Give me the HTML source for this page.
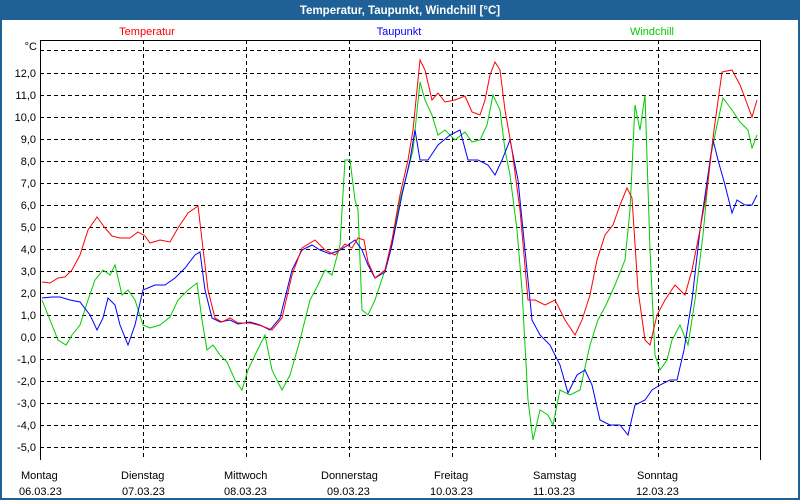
<!DOCTYPE html>
<html><head><meta charset="utf-8"><style>
html,body{margin:0;padding:0;width:800px;height:500px;overflow:hidden;background:#1f6196;}
svg{display:block}
text{font-family:"Liberation Sans",sans-serif;font-size:11px}
</style></head><body>
<svg width="800" height="500" xmlns="http://www.w3.org/2000/svg">
<rect x="0" y="0" width="800" height="500" fill="#1f6196"/>
<text x="400" y="14" text-anchor="middle" fill="#fff" font-weight="bold" style="font-size:11.5px">Temperatur, Taupunkt, Windchill [°C]</text>
<rect x="2" y="20" width="796" height="478" fill="#fff"/>
<text x="147" y="35" text-anchor="middle" fill="#ff0000">Temperatur</text>
<text x="399" y="35" text-anchor="middle" fill="#0000ff">Taupunkt</text>
<text x="652" y="35" text-anchor="middle" fill="#00cc00">Windchill</text>
<g stroke="#000" stroke-dasharray="4,3" stroke-width="1">
<line x1="40" y1="50.5" x2="760" y2="50.5"/>
<line x1="40" y1="73.5" x2="760" y2="73.5"/>
<line x1="40" y1="95.5" x2="760" y2="95.5"/>
<line x1="40" y1="117.5" x2="760" y2="117.5"/>
<line x1="40" y1="139.5" x2="760" y2="139.5"/>
<line x1="40" y1="161.5" x2="760" y2="161.5"/>
<line x1="40" y1="183.5" x2="760" y2="183.5"/>
<line x1="40" y1="205.5" x2="760" y2="205.5"/>
<line x1="40" y1="227.5" x2="760" y2="227.5"/>
<line x1="40" y1="249.5" x2="760" y2="249.5"/>
<line x1="40" y1="271.5" x2="760" y2="271.5"/>
<line x1="40" y1="293.5" x2="760" y2="293.5"/>
<line x1="40" y1="315.5" x2="760" y2="315.5"/>
<line x1="40" y1="337.5" x2="760" y2="337.5"/>
<line x1="40" y1="359.5" x2="760" y2="359.5"/>
<line x1="40" y1="381.5" x2="760" y2="381.5"/>
<line x1="40" y1="403.5" x2="760" y2="403.5"/>
<line x1="40" y1="425.5" x2="760" y2="425.5"/>
<line x1="40" y1="447.5" x2="760" y2="447.5"/>
<line x1="143.5" y1="40" x2="143.5" y2="460"/>
<line x1="246.5" y1="40" x2="246.5" y2="460"/>
<line x1="349.5" y1="40" x2="349.5" y2="460"/>
<line x1="452.5" y1="40" x2="452.5" y2="460"/>
<line x1="555.5" y1="40" x2="555.5" y2="460"/>
<line x1="658.5" y1="40" x2="658.5" y2="460"/>
</g>
<g fill="none" stroke="#000" stroke-width="1"><path d="M40.5 460V40.5H760.5V460"/></g>
<g font-size="11" text-anchor="end" fill="#000">
<text x="37" y="50">°C</text>
<text x="36" y="77">12,0</text><text x="36" y="99">11,0</text><text x="36" y="121">10,0</text>
<text x="36" y="143">9,0</text><text x="36" y="165">8,0</text><text x="36" y="187">7,0</text>
<text x="36" y="209">6,0</text><text x="36" y="231">5,0</text><text x="36" y="253">4,0</text>
<text x="36" y="275">3,0</text><text x="36" y="297">2,0</text><text x="36" y="319">1,0</text>
<text x="36" y="341">0,0</text><text x="36" y="363">-1,0</text><text x="36" y="385">-2,0</text>
<text x="36" y="407">-3,0</text><text x="36" y="429">-4,0</text><text x="36" y="451">-5,0</text>
</g>
<g fill="#000">
<text x="21" y="479">Montag</text><text x="19" y="495">06.03.23</text>
<text x="121" y="479">Dienstag</text><text x="122" y="495">07.03.23</text>
<text x="224" y="479">Mittwoch</text><text x="224" y="495">08.03.23</text>
<text x="321" y="479">Donnerstag</text><text x="327" y="495">09.03.23</text>
<text x="434" y="479">Freitag</text><text x="430" y="495">10.03.23</text>
<text x="533" y="479">Samstag</text><text x="533" y="495">11.03.23</text>
<text x="637" y="479">Sonntag</text><text x="636" y="495">12.03.23</text>
</g>
<polyline fill="none" stroke="#00cc00" stroke-width="1" points="42,300 50,320 58,340 66,345 72,335 80,325 88,300 95,280 103,270 110,275 115,265 122,295 128,290 135,300 143,325 150,328 160,325 170,317 178,300 188,290 197,283 202,320 207,350 213,345 220,355 227,362 235,380 242,390 248,370 255,355 265,335 272,370 282,390 290,375 300,340 310,300 318,285 325,270 332,275 340,245 345,160 350,160 355,200 358,210 362,310 368,315 375,300 385,270 392,242 400,200 408,170 413,150 420,82 425,100 432,115 438,135 445,130 455,140 465,132 472,142 480,140 487,125 493,95 500,110 505,150 510,175 517,230 522,290 528,400 533,440 540,410 548,415 553,425 560,390 570,395 580,390 590,345 598,320 606,305 615,285 625,260 630,210 635,105 640,130 645,95 650,250 655,355 660,370 667,360 672,340 680,325 688,345 695,300 703,235 710,160 717,125 723,98 732,110 740,122 748,130 752,148 757,135"/>
<polyline fill="none" stroke="#0000ff" stroke-width="1" points="42,298 52,297 60,297 70,300 80,302 90,315 97,330 103,318 108,298 115,305 120,325 128,345 135,325 143,290 155,285 165,285 175,278 185,268 195,255 200,252 205,290 212,318 220,322 230,320 238,324 250,322 260,325 270,330 280,318 292,270 302,250 312,245 320,250 330,254 340,250 348,245 355,240 362,250 368,265 375,278 385,272 392,245 402,195 410,160 415,130 420,160 428,160 438,145 450,135 460,130 468,160 478,160 488,165 495,175 502,160 510,140 518,180 525,250 532,320 540,335 550,345 560,365 568,393 577,375 585,370 592,385 600,420 610,425 620,425 628,435 635,405 645,400 652,390 660,385 670,380 677,380 684,350 692,300 700,230 708,175 713,140 718,160 725,185 732,213 737,200 745,205 752,205 757,195"/>
<polyline fill="none" stroke="#ff0000" stroke-width="1" points="42,282 50,283 58,278 65,277 72,270 80,255 88,230 97,217 105,228 112,236 120,238 130,238 138,232 145,236 150,243 160,240 170,242 178,228 188,213 198,206 202,240 208,290 215,318 222,322 230,318 238,323 250,323 262,326 272,330 282,318 292,275 302,248 315,240 325,250 335,255 345,244 352,248 358,238 364,240 368,262 375,278 385,270 392,240 400,195 408,160 413,130 420,60 425,70 432,100 438,93 445,102 455,100 465,96 472,112 480,115 485,100 490,75 495,62 500,70 505,110 512,150 520,210 528,300 535,300 545,305 555,300 565,320 575,335 582,320 590,295 597,260 605,235 613,225 620,205 627,188 632,198 638,290 645,340 650,345 657,315 665,300 675,285 685,295 692,270 700,230 707,190 714,130 722,72 732,70 740,85 745,98 752,117 757,100"/>
</svg>
</body></html>
